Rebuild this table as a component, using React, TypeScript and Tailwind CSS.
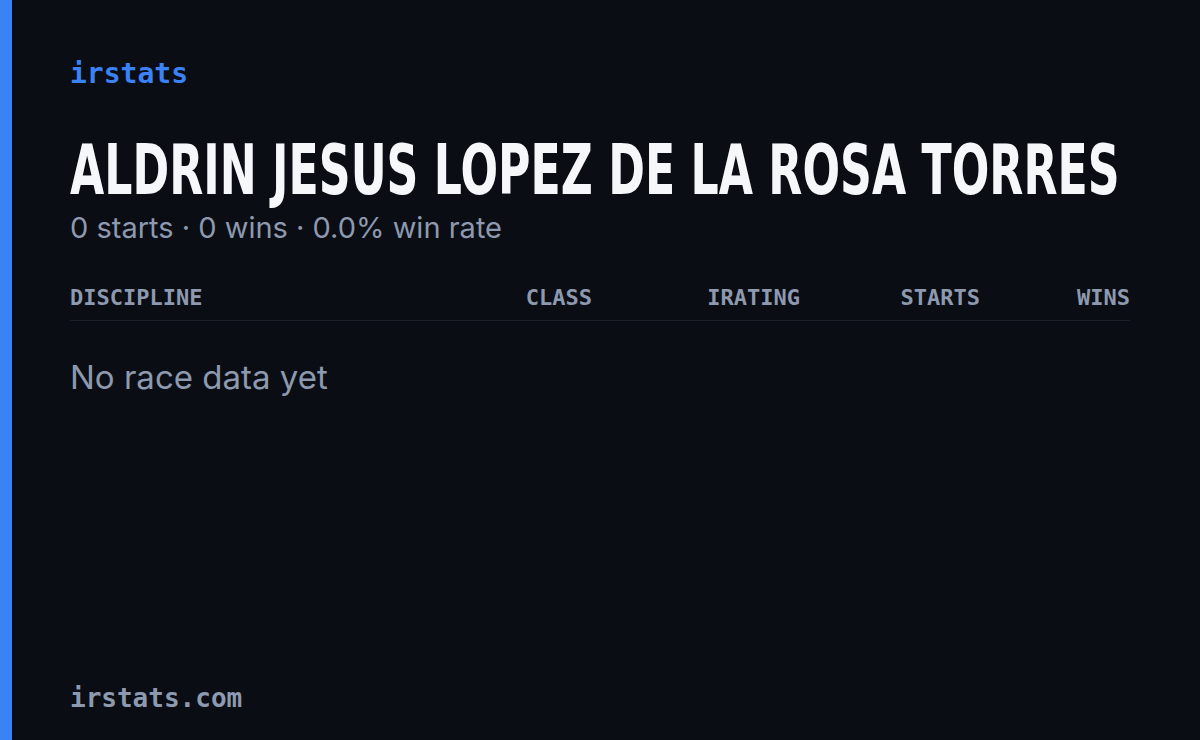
export default function App() {
  return (
    <div className="flex h-[740px] w-[1200px] overflow-hidden bg-[#0a0d14]">
      <div className="w-[12px] shrink-0 bg-[#3b82f6]" />
      <div className="flex min-w-0 flex-1 flex-col pl-[58px] pr-[70px] pt-[57px] pb-[26px]">
        <div className="text-[28px] leading-[34px] font-bold text-[#3b82f6] font-['DejaVu_Sans_Mono',monospace]">irstats</div>
        <div className="mt-[39px] h-[80px] min-w-0">
          <h1 className="w-max origin-left scale-x-[0.632] whitespace-nowrap text-[70px] leading-[80px] font-bold text-[#f6f7fb] font-['DejaVu_Sans',sans-serif]">
            ALDRIN JESUS LOPEZ DE LA ROSA TORRES
          </h1>
        </div>
        <div className="mt-0 text-[29px] leading-[36px] text-[#8d99ae] font-['Inter',sans-serif]">
          0 starts · 0 wins · 0.0% win rate
        </div>
        <div className="mt-[39px] flex border-b border-[#1a1f2a] pb-[9px] text-[22px] leading-[26px] font-bold text-[#8d99ae] font-['DejaVu_Sans_Mono',monospace]">
          <div className="flex-1">DISCIPLINE</div>
          <div className="w-[130px] text-right">CLASS</div>
          <div className="w-[208px] text-right">IRATING</div>
          <div className="w-[180px] text-right">STARTS</div>
          <div className="w-[150px] text-right">WINS</div>
        </div>
        <div className="mt-[36px] text-[33px] leading-[40px] text-[#8d99ae] font-['Inter',sans-serif]">No race data yet</div>
        <div className="mt-auto text-[26px] leading-[32px] font-bold text-[#8d99ae] font-['DejaVu_Sans_Mono',monospace]">irstats.com</div>
      </div>
    </div>
  );
}
